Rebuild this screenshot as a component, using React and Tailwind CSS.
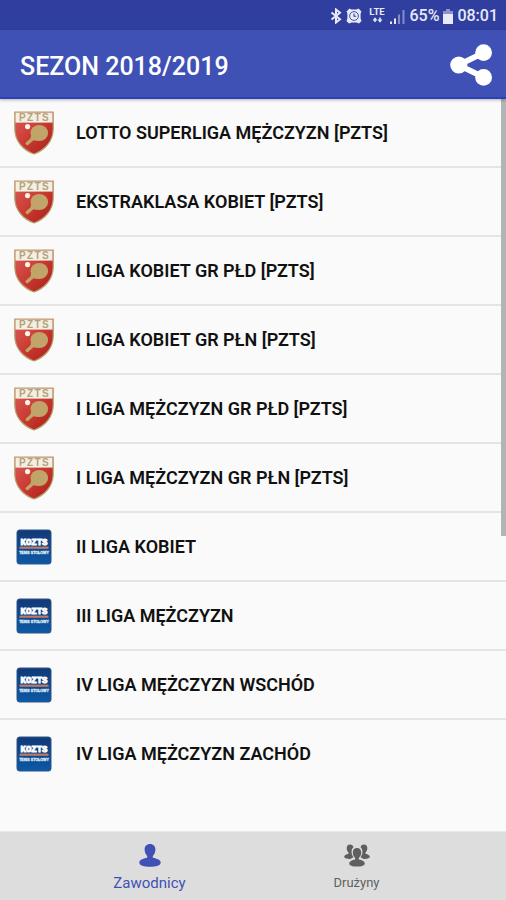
import React from "react";

const leagues = [
  { name: "LOTTO SUPERLIGA MĘŻCZYZN [PZTS]", badge: "pzts" },
  { name: "EKSTRAKLASA KOBIET [PZTS]", badge: "pzts" },
  { name: "I LIGA KOBIET GR PŁD [PZTS]", badge: "pzts" },
  { name: "I LIGA KOBIET GR PŁN [PZTS]", badge: "pzts" },
  { name: "I LIGA MĘŻCZYZN GR PŁD [PZTS]", badge: "pzts" },
  { name: "I LIGA MĘŻCZYZN GR PŁN [PZTS]", badge: "pzts" },
  { name: "II LIGA KOBIET", badge: "kozts" },
  { name: "III LIGA MĘŻCZYZN", badge: "kozts" },
  { name: "IV LIGA MĘŻCZYZN WSCHÓD", badge: "kozts" },
  { name: "IV LIGA MĘŻCZYZN ZACHÓD", badge: "kozts" },
];

function PztsBadge() {
  return (
    <svg viewBox="0 0 40 44" className="h-11 w-10 shrink-0" aria-hidden="true">
      <defs>
        <linearGradient id="shieldRed" x1="0" y1="0" x2="1" y2="1">
          <stop offset="0" stopColor="#d8605a" />
          <stop offset="0.5" stopColor="#cb3a32" />
          <stop offset="1" stopColor="#a81c17" />
        </linearGradient>
      </defs>
      <path d="M.8 1H39.2V18C39.2 30 31 39 20 43C9 39 .8 30 .8 18Z" fill="url(#shieldRed)" stroke="#b5a06c" strokeWidth="1.2" />
      <rect x="1.5" y="1.6" width="37" height="10" fill="#f4efe4" />
      <text x="20.5" y="10.2" textAnchor="middle" fontFamily="Liberation Sans, Arial, sans-serif" fontWeight="700" fontSize="10" letterSpacing="1.4" fill="#b3a37a">PZTS</text>
      <path d="M13.2 32.5L19.5 27" stroke="#c0a46a" strokeWidth="3.4" strokeLinecap="round" />
      <path d="M16 29.5C17.5 25 16.5 23 18.5 20L25.5 29.6C22 29.8 20 29 16 29.5Z" fill="#c0a46a" />
      <ellipse cx="25.3" cy="22" rx="8.8" ry="8" fill="#c0a46a" />
      <circle cx="13.6" cy="15.6" r="2.6" fill="#fff3ea" />
    </svg>
  );
}

function KoztsBadge() {
  return (
    <svg viewBox="0 0 36 36" className="mx-0.5 size-9 shrink-0" aria-hidden="true">
      <defs>
        <linearGradient id="tileBlue" x1="0" y1="0" x2="0" y2="1">
          <stop offset="0" stopColor="#123a78" />
          <stop offset="0.5" stopColor="#10478c" />
          <stop offset="1" stopColor="#0c5aa6" />
        </linearGradient>
      </defs>
      <rect x="1" y="1" width="34" height="34" rx="2.5" fill="url(#tileBlue)" stroke="#2d5588" />
      <text x="18" y="15.8" textAnchor="middle" fontFamily="Liberation Mono, monospace" fontWeight="700" fontSize="9" fill="#fff" stroke="#fff" strokeWidth=".9">KOZTS</text>
      <rect x="3.5" y="17.6" width="29" height="2.2" fill="#c07a62" />
      <text x="18" y="25.4" textAnchor="middle" fontFamily="Liberation Sans, Arial, sans-serif" fontWeight="700" fontSize="3.6" fill="#dbe8f6" stroke="#dbe8f6" strokeWidth=".3">TENIS STOŁOWY</text>
    </svg>
  );
}

function StatusBar() {
  return (
    <div className="flex h-[30px] items-center justify-end bg-[#303f9f] pt-0.5 pr-2 text-base leading-7 font-medium text-[#e8eaf8]">
      <svg viewBox="0 0 12 16" className="mr-1 h-4 w-3" fill="none" stroke="currentColor" strokeWidth="2" aria-hidden="true">
        <path d="M1.5 4.5L10 11.2L6 14.5V1.5L10 4.8L1.5 11.5" />
      </svg>
      <svg viewBox="0 0 16 16" className="mr-1.5 size-4" fill="none" aria-hidden="true">
        <path d="M.5 3.5L3.5 .5L5.5 1.5H10.5L12.5 .5L15.5 3.5L14.6 5.5V10.5L15.5 13L13 15.5L10.5 14.6H5.5L3 15.5L.5 13L1.4 10.5V5.5Z" fill="currentColor" />
        <circle cx="8" cy="8" r="4.4" stroke="#303f9f" strokeWidth=".9" />
        <path d="M8 5.4V8.3H10.2" stroke="#303f9f" strokeWidth="1.1" />
      </svg>
      <svg viewBox="0 0 18 18" className="mr-1 size-[18px]" fill="currentColor" aria-hidden="true">
        <text x="9" y="8.4" textAnchor="middle" fontFamily="Roboto, sans-serif" fontWeight="700" fontSize="9.5">LTE</text>
        <path d="M4.5 13.5L7 10.3L9.5 13.5ZM9.5 12.5H14.5L12 15.7ZM6.2 12.5H7.8V15H6.2ZM11.2 10.5H12.8V13.5H11.2Z" />
      </svg>
      <svg viewBox="0 0 15 15" className="mr-1 size-[15px]" fill="currentColor" aria-hidden="true">
        <path d="M0 12.5H2V15H0ZM4 9.5H6V15H4Z" />
        <path d="M8 5.5H10V15H8ZM12.5 1H14.5V15H12.5Z" opacity=".45" />
      </svg>
      <span>65%</span>
      <svg viewBox="0 0 10 15" className="mx-1 h-[15px] w-2.5" fill="currentColor" aria-hidden="true">
        <path d="M3 0H7V2H10V5H0V2H3Z" opacity=".5" />
        <path d="M0 5H10V15H0Z" />
      </svg>
      <span>08:01</span>
    </div>
  );
}

export default function App() {
  return (
    <div className="flex min-h-screen flex-col bg-[#fafafa] font-['Roboto','Noto_Sans',sans-serif]">
      <StatusBar />
      <header className="relative z-10 flex h-[69px] items-center justify-between border-b-2 border-[#2b41b8] bg-[#3f51b5] pt-0.5 pr-3.5 pl-5 shadow-[0_1px_3px_rgba(0,0,0,0.3)]">
        <h1 className="pt-1 text-[25px] leading-8 font-medium text-white">SEZON 2018/2019</h1>
        <button type="button" aria-label="Udostępnij">
          <svg viewBox="0 0 44 44" className="size-[42px]" aria-hidden="true">
            <path d="M35.5 9L9 22L35.5 35" fill="none" stroke="#fff" strokeWidth="6" />
            <circle cx="35.2" cy="9" r="8.8" fill="#fff" />
            <circle cx="9.2" cy="22" r="9" fill="#fff" />
            <circle cx="35.2" cy="35" r="8.8" fill="#fff" />
          </svg>
        </button>
      </header>

      <main className="relative flex-1">
        <ul>
          {leagues.map((league) => (
            <li key={league.name} className="h-[69px] border-b-2 border-[#e4e4e4] last:border-transparent">
              <button type="button" className="flex h-full w-full items-center gap-5.5 px-3.5 text-left text-lg font-semibold text-[#111]">
                {league.badge === "pzts" ? <PztsBadge /> : <KoztsBadge />}
                <span>{league.name}</span>
              </button>
            </li>
          ))}
        </ul>
        <div className="absolute top-0 right-0 h-[437px] w-[5px] bg-[#b4b4b4]" />
      </main>

      <nav className="flex h-[69px] justify-center border-t border-[#e9e9e9] bg-[#dddddd]">
        <button type="button" className="flex w-[207px] flex-col items-center pt-3 text-[#3f51b5]">
          <svg viewBox="0 0 22 23" className="h-[23px] w-[22px]" fill="currentColor" aria-hidden="true">
            <path d="M11 0C7.7 0 5.6 2.3 5.6 5.3C5.6 8.4 6.8 10.6 8.2 12V13.8C4 14.6 .3 16 .3 18.4C.3 21.3 5 22.8 11 22.8S21.7 21.3 21.7 18.4C21.7 16 18 14.6 13.8 13.8V12C15.2 10.6 16.4 8.4 16.4 5.3C16.4 2.3 14.3 0 11 0Z" />
          </svg>
          <span className="mt-1.5 text-[15px] leading-5">Zawodnicy</span>
        </button>
        <button type="button" className="flex w-[207px] flex-col items-center pt-3 text-[#5f5f5f]">
          <svg viewBox="0 0 26 22" className="h-[23px] w-[26px]" fill="currentColor" aria-hidden="true">
            <path d="M6 0C3.8 0 2.7 1.5 2.7 3.6C2.7 5.8 3.4 7 4.5 8V9.2C2 9.7 .2 10.8 .2 12.3C.2 13.8 3 14.5 6.6 14.5C7.2 13.8 8.2 13.2 9.5 12.8C8 10.8 7.4 9 7.6 6.8C7.7 4.8 8.3 3.6 9.5 2.7C9 .9 7.9 0 6 0Z" />
            <path d="M20 0C22.2 0 23.3 1.5 23.3 3.6C23.3 5.8 22.6 7 21.5 8V9.2C24 9.7 25.8 10.8 25.8 12.3C25.8 13.8 23 14.5 19.4 14.5C18.8 13.8 17.8 13.2 16.5 12.8C18 10.8 18.6 9 18.4 6.8C18.3 4.8 17.7 3.6 16.5 2.7C17 .9 18.1 0 20 0Z" />
            <path d="M13 3.6C10.2 3.6 8.8 5.5 8.8 8.1C8.8 10.5 9.8 12.3 11.2 13.4V15C7.8 15.6 5.2 17 5.2 18.9C5.2 21 8.6 22 13 22S20.8 21 20.8 18.9C20.8 17 18.2 15.6 14.8 15V13.4C16.2 12.3 17.2 10.5 17.2 8.1C17.2 5.5 15.8 3.6 13 3.6Z" />
          </svg>
          <span className="mt-1.5 text-[13px] leading-5">Drużyny</span>
        </button>
      </nav>
    </div>
  );
}
